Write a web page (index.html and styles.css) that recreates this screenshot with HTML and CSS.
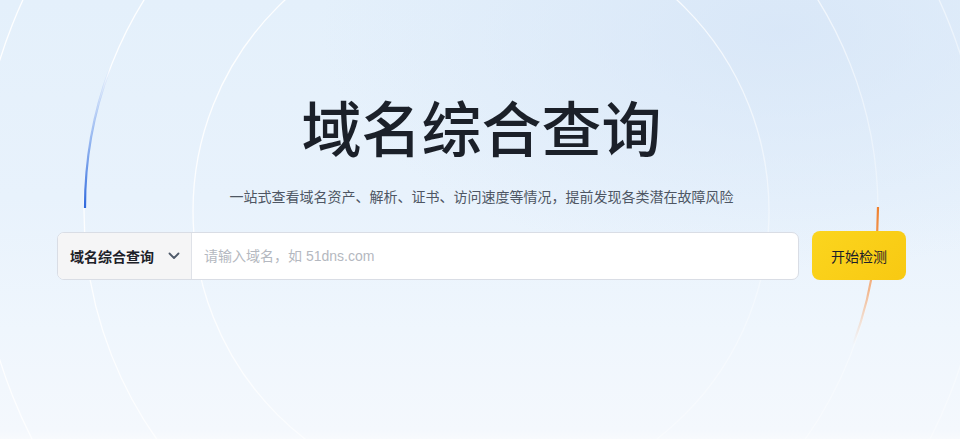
FILE: index.html
```html
<!DOCTYPE html>
<html lang="zh-CN">
<head>
<meta charset="utf-8">
<title>域名综合查询</title>
<link rel="stylesheet" href="styles.css">
</head>
<body>
<div class="hero">
  <svg class="rings" width="960" height="439" viewBox="0 0 960 439" aria-hidden="true">
    <defs>
      <linearGradient id="ringFade" x1="200" y1="0" x2="560" y2="439" gradientUnits="userSpaceOnUse">
        <stop offset="0" stop-color="#ffffff" stop-opacity="0.95"/>
        <stop offset="0.55" stop-color="#ffffff" stop-opacity="0.8"/>
        <stop offset="1" stop-color="#ffffff" stop-opacity="0.35"/>
      </linearGradient>
      <linearGradient id="blueArc" x1="0" y1="68" x2="0" y2="208" gradientUnits="userSpaceOnUse">
        <stop offset="0" stop-color="#3d78e6" stop-opacity="0"/>
        <stop offset="0.5" stop-color="#5b8ee8" stop-opacity="0.6"/>
        <stop offset="1" stop-color="#2d67dc" stop-opacity="1"/>
      </linearGradient>
      <linearGradient id="orangeArc" x1="0" y1="207" x2="0" y2="345" gradientUnits="userSpaceOnUse">
        <stop offset="0" stop-color="#ef7f2c" stop-opacity="1"/>
        <stop offset="0.6" stop-color="#f39a5a" stop-opacity="0.7"/>
        <stop offset="1" stop-color="#f6b58a" stop-opacity="0"/>
      </linearGradient>
    </defs>
    <g fill="none" stroke="url(#ringFade)" stroke-width="1.3">
      <circle cx="481" cy="211" r="288"/>
      <circle cx="481" cy="210" r="397"/>
      <circle cx="481" cy="210" r="504"/>
    </g>
    <path d="M110 68 A397 397 0 0 0 85 208" fill="none" stroke="url(#blueArc)" stroke-width="2.2"/>
    <path d="M878 207 A397 397 0 0 1 853 345" fill="none" stroke="url(#orangeArc)" stroke-width="2.2"/>
  </svg>

  <main class="content">
    <h1 class="title">域名综合查询</h1>
    <p class="subtitle">一站式查看域名资产、解析、证书、访问速度等情况，提前发现各类潜在故障风险</p>
    <div class="search">
      <div class="field">
        <div class="select">
          <span class="select-label">域名综合查询</span>
          <svg class="chevron" width="12" height="8" viewBox="0 0 12 8" aria-hidden="true">
            <path d="M1.5 1.5 L6 6 L10.5 1.5" fill="none" stroke="#4e5969" stroke-width="1.8" stroke-linecap="round" stroke-linejoin="round"/>
          </svg>
        </div>
        <input class="input" type="text" placeholder="请输入域名，如 51dns.com">
      </div>
      <button class="btn" type="button">开始检测</button>
    </div>
  </main>
</div>
</body>
</html>
```

FILE: styles.css
```css
* {
  box-sizing: border-box;
}

html, body {
  margin: 0;
  padding: 0;
}

body {
  font-family: "Noto Sans CJK SC", "Noto Sans", "Liberation Sans", sans-serif;
  color: #1d2129;
}

.hero {
  position: relative;
  width: 960px;
  height: 439px;
  overflow: hidden;
  background:
    radial-gradient(ellipse 460px 240px at 780px 30px, rgba(214, 229, 247, 0.8), rgba(214, 229, 247, 0) 100%),
    linear-gradient(180deg, #e4f0fb 0%, #e8f2fc 45%, #eff6fd 75%, #f4f8fd 98%, #f8fafd 100%);
}

.rings {
  position: absolute;
  left: 0;
  top: 0;
  z-index: 0;
}

.content {
  position: relative;
  z-index: 1;
  display: flex;
  flex-direction: column;
  align-items: center;
  padding: 96px 0 0 3px;
}

.title {
  margin: 0;
  font-size: 60px;
  line-height: 60px;
  font-weight: 500;
  color: #1b2029;
  letter-spacing: 0;
}

.subtitle {
  margin: 29px 0 0;
  font-size: 14px;
  line-height: 22px;
  color: #4e5663;
}

.search {
  margin-top: 25px;
  width: 849px;
  display: flex;
  gap: 13px;
}

.field {
  flex: 1;
  display: flex;
  height: 48px;
  border: 1px solid #d9dde5;
  border-radius: 7px;
  background: #ffffff;
  overflow: hidden;
}

.select {
  width: 134px;
  flex: none;
  display: flex;
  align-items: center;
  justify-content: space-between;
  padding: 0 11px 0 12px;
  background: #f5f5f6;
  border-right: 1px solid #dfe2e8;
}

.select-label {
  font-size: 14px;
  font-weight: 700;
  color: #1d2129;
}

.chevron {
  display: block;
}

.input {
  flex: 1;
  border: 0;
  outline: 0;
  padding: 0 12px;
  font-family: "Liberation Sans", "Noto Sans CJK SC", sans-serif;
  font-size: 14px;
  color: #1d2129;
  background: transparent;
}

.input::placeholder {
  color: #b4b8c0;
}

.btn {
  width: 94px;
  height: 49px;
  margin-top: -1px;
  border: 0;
  border-radius: 8px;
  background: linear-gradient(135deg, #fbd51e 0%, #f8c912 100%);
  font-family: inherit;
  font-size: 14px;
  color: #1d2129;
  cursor: pointer;
}
```
